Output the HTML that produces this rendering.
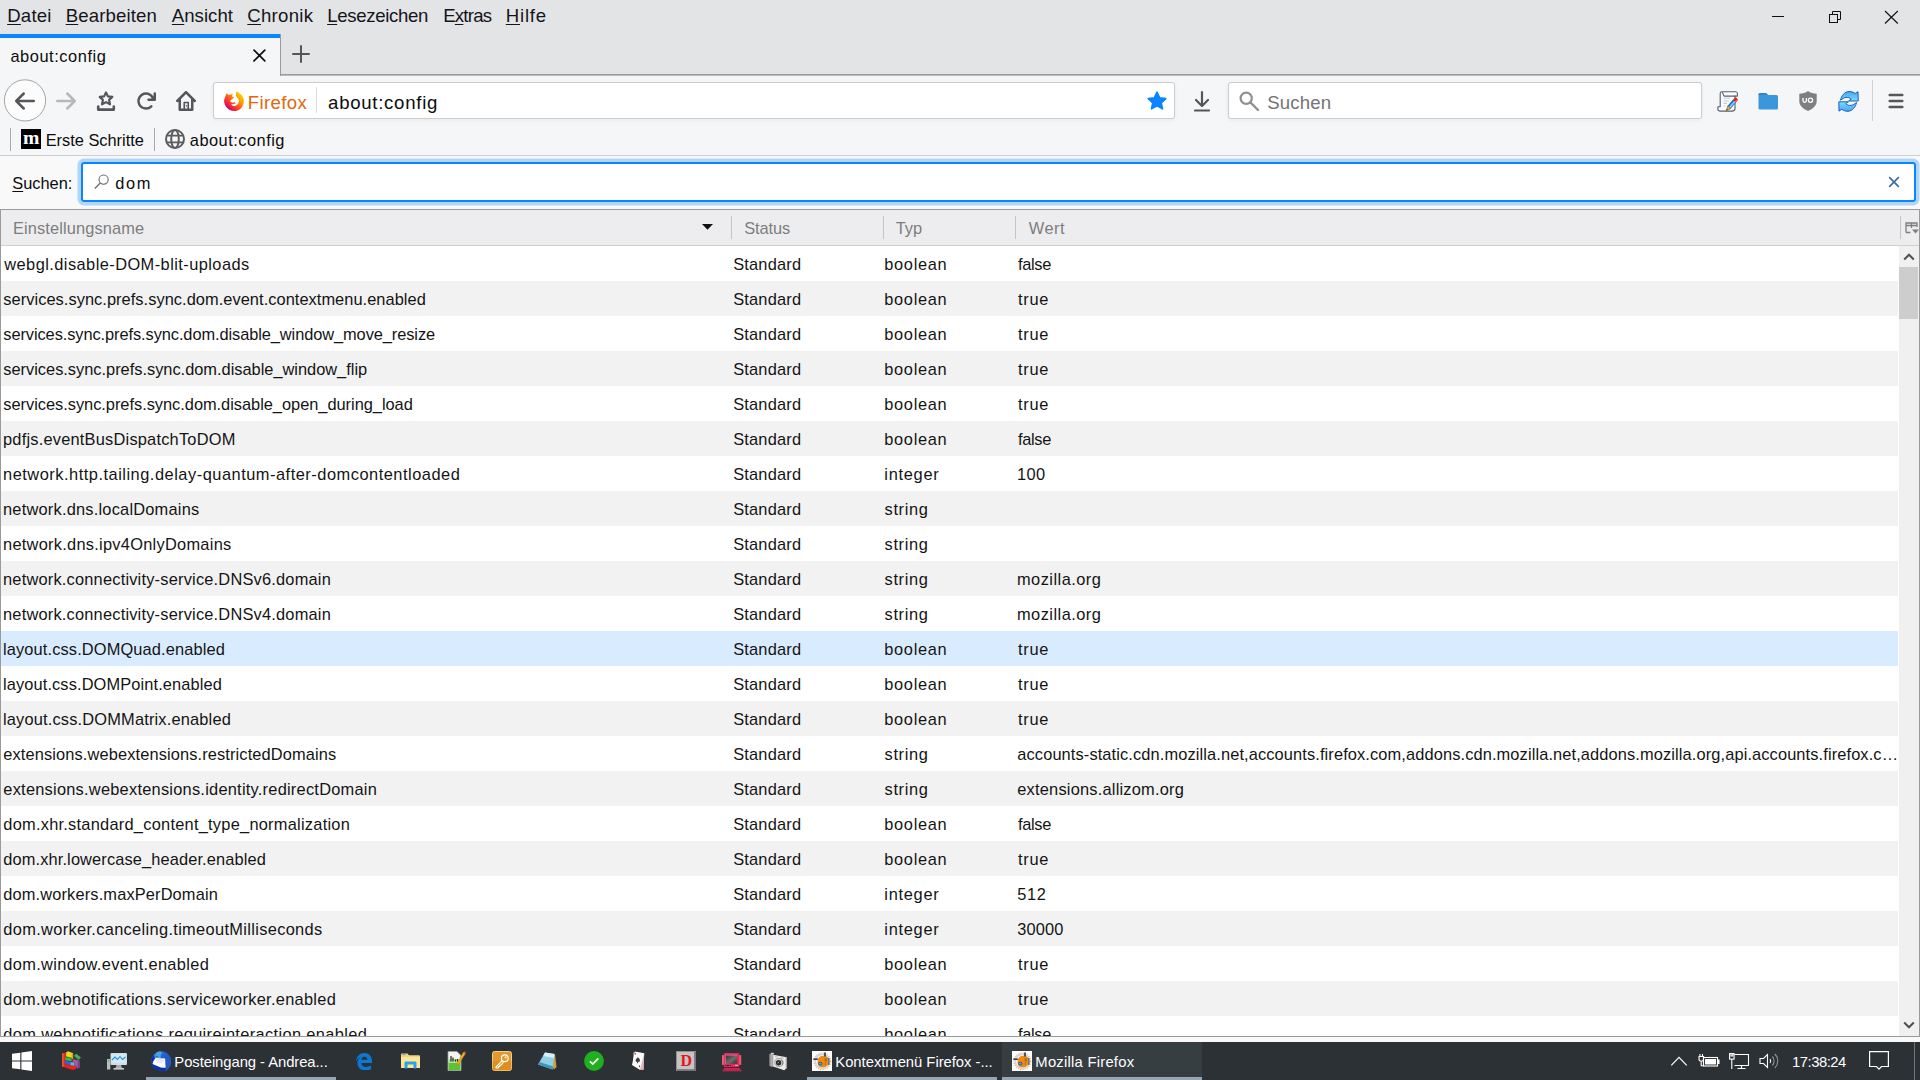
<!DOCTYPE html><html lang="de"><head><meta charset="utf-8"><title>about:config</title><style>
*{box-sizing:border-box;margin:0;padding:0}
html,body{width:1920px;height:1080px;overflow:hidden;background:#f9f9fa;font-family:"Liberation Sans",sans-serif}
.abs,.t,.c,svg.i{position:absolute}
.t{white-space:nowrap;line-height:1;display:block}
.t u{text-decoration:underline;text-decoration-thickness:1px;text-underline-offset:2px}
#menubar{background:#e3e4e6}
#tabstrip{left:0;top:34px;width:1920px;height:42px;background:#e3e4e6}
#tabstrip .bline{left:280px;top:40px;width:1640px;height:1px;background:#9a9a9c}
#tabstrip .bline2{left:281px;top:41px;width:1639px;height:1px;background:#bdbdbf}
#tab{background:#f5f6f7;box-shadow:inset -1px 0 0 #9a9a9c}
#tab .line{left:0;top:.4px;width:280px;height:3.6px;background:#0a84ff}
#navbar{left:0;top:76px;width:1920px;height:47px;background:#f5f6f7}
#urlbar,#searchbar{background:#fff;border-radius:3px;box-shadow:inset 0 0 0 1px #cdcdcf,0 1px 4px rgba(0,0,0,.06)}
#bookmarks{background:#f5f6f7;border-bottom:1px solid #cfcfd1}
#searchrow{background:#f9f9fa}
#filter{background:#fff;border-radius:3px;box-shadow:inset 0 0 0 2px #0a84ff,0 0 0 3.5px rgba(10,132,255,.3)}
#tree{left:0;top:209px;width:1920px;height:828px;border:1px solid #9a9a9a;background:#fff}
#treehead{background:#ededf0;border-bottom:1px solid #cfcfd1}
.sep{width:1px;background:#c4c4c6}
.row{background:#fff;overflow:hidden}
.row.odd{background:#f2f2f2}
.row.sel{background:#d9ebff}
#vscroll{left:1899px;top:246px;width:20px;height:790px;background:#f0f0f0}
#vscroll .thumb{left:0;top:21px;width:19px;height:52px;background:#cdcdcd}
#strip{left:0;top:1037px;width:1920px;height:5px;background:#f9f9fa}
#taskbar{background:#2c3136}
#taskbar .ul{height:3px;top:35px;background:#95a7b3}
#taskbar .act{left:1002px;top:0;width:200px;height:38px;background:#373e42}
</style></head><body>
<div id="menubar" class="abs " style="left:0px;top:0px;width:1920px;height:34px"><svg class="i" style="left:1760px;top:0px" width="160" height="34" viewBox="0 0 160 34" ><g fill="none" stroke="#111" stroke-width="1"><path d="M12 16.500H24"/><rect x="69.500" y="14.500" width="8" height="8"/><path d="M72.500 14.500V11.500H80.500V19.500H77.500"/><path d="M125 11L137.800 23.500M137.800 11L125 23.500" stroke-width="1.100"/></g></svg><span class="t" style="left:7.16px;top:6.70px;font-size:18.6px;letter-spacing:0.231px;color:#15141a"><u>D</u>atei</span><span class="t" style="left:65.70px;top:6.70px;font-size:18.6px;letter-spacing:0.142px;color:#15141a"><u>B</u>earbeiten</span><span class="t" style="left:171.84px;top:6.70px;font-size:18.6px;letter-spacing:0.019px;color:#15141a"><u>A</u>nsicht</span><span class="t" style="left:247.30px;top:6.70px;font-size:18.6px;letter-spacing:0.271px;color:#15141a"><u>C</u>hronik</span><span class="t" style="left:327.14px;top:6.70px;font-size:18.6px;letter-spacing:-0.315px;color:#15141a"><u>L</u>esezeichen</span><span class="t" style="left:443.14px;top:6.70px;font-size:18.6px;letter-spacing:-0.740px;color:#15141a">E<u>x</u>tras</span><span class="t" style="left:505.80px;top:6.70px;font-size:18.6px;letter-spacing:0.766px;color:#15141a"><u>H</u>ilfe</span></div>
<div id="tabstrip" class="abs"><div class="abs bline"></div><div class="abs bline2"></div><svg class="i" style="left:288px;top:7px" width="26" height="26" viewBox="0 0 26 26" ><path d="M13 5V21M5 13H21" stroke="#55555a" stroke-width="2" stroke-linecap="round" fill="none"/></svg></div>
<div id="tab" class="abs " style="left:0px;top:34px;width:281px;height:42px"><div class="abs line"></div><svg class="i" style="left:251px;top:13px" width="17" height="17" viewBox="0 0 17 17" ><path d="M3 3.1L13.8 13.9M13.8 3.1L3 13.9" stroke="#0c0c0d" stroke-width="1.7" stroke-linecap="round" fill="none"/></svg><span class="t" style="left:10.46px;top:13.70px;font-size:16.4px;letter-spacing:0.550px;color:#0c0c0d">about:config</span></div>
<div id="navbar" class="abs"><svg class="i" style="left:3px;top:2px" width="44" height="45" viewBox="0 0 44 45" ><circle cx="22" cy="22.4" r="20.6" fill="#fcfcfd" stroke="#a4a4a7" stroke-width="1"/></svg><svg class="i" style="left:15px;top:15px" width="20" height="20" viewBox="0 0 16 16" ><path d="M15 7H3.414l4.293-4.293a1 1 0 0 0-1.414-1.414l-6 6a1 1 0 0 0 0 1.414l6 6a1 1 0 0 0 1.414-1.414L3.414 9H15a1 1 0 0 0 0-2z" fill="#55555a"/></svg><svg class="i" style="left:56px;top:15px" width="20" height="20" viewBox="0 0 16 16" ><path d="M1 7h11.586L8.293 2.707a1 1 0 0 1 1.414-1.414l6 6a1 1 0 0 1 0 1.414l-6 6a1 1 0 0 1-1.414-1.414L12.586 9H1a1 1 0 0 1 0-2z" fill="#b7b7ba"/></svg><svg class="i" style="left:95px;top:14px" width="22" height="22" viewBox="0 0 22 22" ><g fill="none" stroke="#55555a" stroke-linejoin="round" stroke-linecap="round"><path d="M11 2.400L12.900 6.400L17.300 6.900L14.100 9.900L15 14.300L11 12.100L7 14.300L7.900 9.900L4.700 6.900L9.100 6.400Z" stroke-width="2.200"/><path d="M3.200 16.500V19.600H18.800V16.500" stroke-width="2.600"/></g></svg><svg class="i" style="left:135.7px;top:15px" width="20" height="20" viewBox="0 0 16 16" ><path d="M15 1a1 1 0 0 0-1 1v2.418A6.995 6.995 0 1 0 8 15a6.954 6.954 0 0 0 4.950-2.050 1 1 0 0 0-1.414-1.414A5.019 5.019 0 1 1 12.549 6H10a1 1 0 0 0 0 2h5a1 1 0 0 0 1-1V2a1 1 0 0 0-1-1z" fill="#55555a"/></svg><svg class="i" style="left:176px;top:15px" width="20" height="20" viewBox="0 0 16 16" ><path fill-rule="evenodd" d="M15.707 7.293l-7-7a1 1 0 0 0-1.414 0l-7 7a1 1 0 0 0 1.414 1.414L2 8.414V15a1 1 0 0 0 1 1h10a1 1 0 0 0 1-1V8.414l.293.293a1 1 0 0 0 1.414-1.414zM12 14H4V6.414l4-4 4 4z" fill="#55555a"/><path d="M6.600 14.500V9.200H9.800V14.500" fill="none" stroke="#55555a" stroke-width="1.300" stroke-linejoin="round"/><rect x="7.900" y="11.300" width="1" height="1.100" fill="#55555a"/></svg><svg class="i" style="left:1190px;top:13px" width="24" height="24" viewBox="0 0 24 24" ><g fill="none" stroke="#55555a" stroke-width="2.2" stroke-linecap="round" stroke-linejoin="round"><path d="M12 3V16.5M6 11L12 17L18 11"/><path d="M5 21.5H19" /></g></svg><svg class="i" style="left:1717.2px;top:14.5px" width="21" height="21" viewBox="0 0 21 21" ><defs><linearGradient id="png" x1="0" y1="0" x2="0" y2="1"><stop offset="0" stop-color="#1a5fd0"/><stop offset=".4" stop-color="#a9e2ff"/><stop offset=".62" stop-color="#1f9ff2"/><stop offset="1" stop-color="#0b3fb5"/></linearGradient></defs><path d="M3.200 2.500Q3.200 .800 5 .800H18.800Q20.400 .800 20.400 2.800V5.100H18V17.500Q18 20.100 15 20.100H3.500Q.900 20.100 .900 18V15.700H3.200Z" fill="#fafbfd" stroke="#556071" stroke-width="1.100" stroke-linejoin="round"/><path d="M6.900 5.100H18.500M6.900 5.100L5.300 1.100" fill="none" stroke="#556071" stroke-width="1.100"/><path d="M6.600 7.200H13M6.600 10H12M6.600 12.400H10M6.600 15H8.500" stroke="#c3cbdb" stroke-width="1.100"/><g transform="translate(19.600 7.600) rotate(130.600)"><path d="M3 -2H11.200V2H3Z" fill="url(#png)"/><path d="M1.500 -2H3.400V2H1.500A2 2 0 0 1 1.500 -2Z" fill="#e3241b"/><path d="M1.300 -1.200H3.400" stroke="#f58a84" stroke-width=".9"/><path d="M11.200 -2L15.800 0L11.200 2Z" fill="#e0b354" stroke="#8a6414" stroke-width=".7" stroke-linejoin="round"/><path d="M14.300 -.650L15.800 0L14.300 .650Z" fill="#3a2a08"/></g></svg><svg class="i" style="left:1757px;top:14px" width="22" height="22" viewBox="0 0 22 22" ><path d="M1.5 4.5a1.5 1.5 0 0 1 1.5-1.5h6l2 2h8.5a1.5 1.5 0 0 1 1.500 1.5V18a1.5 1.5 0 0 1-1.5 1.5H3A1.5 1.500 0 0 1 1.500 18Z" fill="#3b97dc"/><path d="M1.5 4.500a1.500 1.500 0 0 1 1.500-1.500h6l2 2H1.500Z" fill="#2f86c9"/></svg><svg class="i" style="left:1797px;top:14px" width="22" height="22" viewBox="0 0 22 22" ><path d="M11 1C8.500 2.800 5.500 3.600 2.300 3.800V11c0 4.500 3.500 7.800 8.700 10 5.200-2.200 8.700-5.500 8.700-10V3.800C16.500 3.600 13.500 2.800 11 1Z" fill="#7f7f7f"/><path d="M6 8v2.600a1.700 1.700 0 0 0 3.400 0V8" fill="none" stroke="#fff" stroke-width="1.300"/><circle cx="13.500" cy="10.300" r="2.100" fill="none" stroke="#fff" stroke-width="1.300"/></svg><svg class="i" style="left:1837.5px;top:14.5px" width="21" height="21" viewBox="0 0 21 21" ><defs><linearGradient id="syg" x1="0" y1="0" x2="0" y2="1"><stop offset="0" stop-color="#4aa6ee"/><stop offset=".6" stop-color="#63c6fb"/><stop offset="1" stop-color="#7fe0fc"/></linearGradient></defs><path d="M2.500 9.200C3.300 5 6.500 .700 11 .500C13.800 .500 15.800 1.400 17.200 2.500L20 .700L20.200 10H10.600L13.300 8.100C12 6.700 10 6.200 8 6.400C6 6.700 4.500 7.700 2.500 9.200Z" fill="url(#syg)" stroke="#1f5cc0" stroke-width="1" stroke-linejoin="round"/><path d="M2.500 9.200C3.300 5 6.500 .700 11 .500C13.800 .500 15.800 1.400 17.200 2.500L20 .700L20.200 10H10.600L13.300 8.100C12 6.700 10 6.200 8 6.400C6 6.700 4.500 7.700 2.500 9.200Z" fill="url(#syg)" stroke="#1f5cc0" stroke-width="1" stroke-linejoin="round" transform="rotate(180 10.500 10.400)"/></svg><div class="abs" style="left:1872px;top:4px;width:1px;height:41px;background:#d2d2d4"></div><svg class="i" style="left:1886px;top:14px" width="20" height="22" viewBox="0 0 20 22" ><path d="M3.700 5H16.300M3.700 11H16.300M3.700 17H16.300" stroke="#55555a" stroke-width="2.500" stroke-linecap="round" fill="none"/></svg></div>
<div id="urlbar" class="abs " style="left:213px;top:82px;width:962px;height:37px"><svg class="i" style="left:11px;top:9px" width="20" height="20" viewBox="0 0 20 20" ><defs><linearGradient id="fxg" x1="0.88" y1="0.12" x2="0.18" y2="0.88"><stop offset="0" stop-color="#ffd60a"/><stop offset=".3" stop-color="#ffa000"/><stop offset=".58" stop-color="#ff5a1c"/><stop offset=".8" stop-color="#ff2236"/><stop offset="1" stop-color="#b3057f"/></linearGradient></defs><path d="M13.500 .2C14.300 1.900 15.700 2.300 16.800 3.200C18 4.200 18.700 5.500 19.200 6.800C19.700 8 20 9 19.900 10.300C19.900 11.600 19.600 12.800 19 14C18.600 15.100 18.100 16.100 17.300 17C16.300 18.100 15 18.900 13.500 19.400C12.400 19.800 11.300 20 10.100 19.900C8.800 19.900 7.500 19.700 6.300 19.200C5.100 18.700 4.100 17.900 3.200 17C2.200 16.100 1.500 15 1 13.800C.5 12.700 .2 11.500 .1 10.300C.1 9.100 .4 7.900 .9 6.700C1.400 5.600 1.600 4.400 2.100 3.300C2.500 2.800 3 2.500 3.500 2.200C3.600 2.900 3.900 3.400 4.300 3.900C5.100 3.600 6 3.500 6.800 3.600C7.400 3.300 8.100 3.100 8.800 3C8.300 3.800 8 4.700 7.900 5.600C8.600 5.700 9.300 5.800 10 6.100C9.600 6.800 9.100 7.500 8.400 8C7.700 8.500 6.900 8.900 6.300 9.400C6.200 9.900 6.200 10.400 6.500 10.800C7.100 11.300 7.800 11.600 8.500 11.700C9.200 11.700 9.900 11.300 10.500 11.100C11 11.500 11.500 11.900 11.800 12.500C11.100 12.800 10.400 12.900 9.600 13C8.800 13.200 8 13.300 7.100 13.300C7.500 13.900 7.900 14.400 8.500 14.700C9.200 15 10 15.100 10.700 15C11.700 14.800 12.500 14.300 13.200 13.600C13.800 13 14.300 12.200 14.600 11.400C14.900 10.600 15 9.700 14.900 8.900C14.600 8.100 14.100 7.500 13.500 6.900C13 6.400 12.400 5.900 12.100 5.300C11.800 4.600 11.700 3.800 11.800 3C11.900 2.300 12.100 1.700 12.400 1.100C12.700 .7 13.100 .4 13.500 .2Z" fill="url(#fxg)"/></svg><div class="abs" style="left:103px;top:5px;width:1px;height:26px;background:#dcdcde"></div><svg class="i" style="left:933px;top:8px" width="22" height="22" viewBox="0 0 22 22" ><path d="M11 2.200L13.700 7.800L19.800 8.600L15.300 12.800L16.500 18.900L11 15.900L5.500 18.900L6.700 12.800L2.200 8.600L8.300 7.800Z" fill="#0a84ff" stroke="#0a84ff" stroke-width="1.600" stroke-linejoin="round"/></svg><span class="t" style="left:34.80px;top:11.70px;font-size:18.6px;letter-spacing:0.349px;color:#e2670a">Firefox</span><span class="t" style="left:115.08px;top:11.70px;font-size:18.6px;letter-spacing:0.721px;color:#0c0c0d">about:config</span></div>
<div id="searchbar" class="abs " style="left:1228px;top:82px;width:474px;height:37px"><svg class="i" style="left:10px;top:8px" width="22" height="22" viewBox="0 0 22 22" ><circle cx="8.200" cy="8.200" r="5.600" fill="none" stroke="#8f8f94" stroke-width="2.200"/><path d="M12.500 12.500L20 20" stroke="#8f8f94" stroke-width="2.400" stroke-linecap="round"/></svg><span class="t" style="left:39.32px;top:11.70px;font-size:18.6px;letter-spacing:0.136px;color:#737373">Suchen</span></div>
<div id="bookmarks" class="abs " style="left:0px;top:123px;width:1920px;height:33px"><div class="abs sep" style="left:10px;top:5px;height:23px;background:#a8a8ab"></div><div class="abs sep" style="left:154px;top:5px;height:23px;background:#a8a8ab"></div><svg class="i" style="left:21px;top:6px" width="20" height="20" viewBox="0 0 20 20"><rect width="20" height="20" fill="#000"/><text x="1.900" y="15" textLength="16.400" lengthAdjust="spacingAndGlyphs" font-family="Liberation Serif, serif" font-weight="700" font-size="19.500" fill="#fff">m</text></svg><svg class="i" style="left:164px;top:5px" width="22" height="22" viewBox="0 0 22 22" ><g fill="none" stroke="#5d5d61" stroke-width="2"><circle cx="11" cy="11" r="9"/><ellipse cx="11" cy="11" rx="3.800" ry="9"/><path d="M3 7.600H19M3 14.400H19" stroke-width="1.800"/></g></svg><span class="t" style="left:45.70px;top:8.80px;font-size:16.4px;letter-spacing:-0.018px;color:#0c0c0d">Erste Schritte</span><span class="t" style="left:189.80px;top:8.80px;font-size:16.4px;letter-spacing:0.488px;color:#0c0c0d">about:config</span></div>
<div id="searchrow" class="abs " style="left:0px;top:156px;width:1920px;height:54px"><span class="t" style="left:12.30px;top:18.75px;font-size:16.4px;letter-spacing:-0.028px;color:#0c0c0d"><u>S</u>uchen:</span></div>
<div id="filter" class="abs " style="left:81px;top:162px;width:1835px;height:40px"><svg class="i" style="left:12px;top:11px" width="18" height="18" viewBox="0 0 18 18" ><circle cx="10.600" cy="6.600" r="4.600" fill="none" stroke="#6a6a6a" stroke-width="1.100"/><path d="M7.300 10L1.800 15.500" stroke="#6a6a6a" stroke-width="1.300"/></svg><svg class="i" style="left:1806px;top:13px" width="14" height="14" viewBox="0 0 14 14" ><path d="M2.200 2.200L11.800 11.800M11.800 2.200L2.200 11.800" stroke="#3b6ea5" stroke-width="1.700" fill="none"/></svg><span class="t" style="left:34.30px;top:12.75px;font-size:16.4px;letter-spacing:1.574px;color:#0c0c0d">dom</span></div>
<div id="tree" class="abs"></div>
<div id="treehead" class="abs " style="left:1px;top:210px;width:1918px;height:36px"><div class="abs sep" style="left:730px;top:6px;height:23px"></div><div class="abs sep" style="left:882px;top:6px;height:23px"></div><div class="abs sep" style="left:1014px;top:6px;height:23px"></div><div class="abs sep" style="left:1899px;top:6px;height:23px"></div><svg class="i" style="left:700px;top:13px" width="13" height="8" viewBox="0 0 13 8" ><path d="M1 1H12L6.500 6.800Z" fill="#111"/></svg><svg class="i" style="left:1904px;top:12px" width="14" height="13" viewBox="0 0 14 13" ><path d="M1 10.500V1H12V5M1 3.500H12M6.500 1V6M1 10.500H5.500" fill="none" stroke="#7e7e7e" stroke-width="1.300"/><path d="M7 7.500H14L10.500 11.500Z" fill="#7e7e7e"/></svg><span class="t" style="left:11.98px;top:9.75px;font-size:16.4px;letter-spacing:0.117px;color:#7d7d7d">Einstellungsname</span><span class="t" style="left:743.30px;top:9.75px;font-size:16.4px;letter-spacing:-0.114px;color:#7d7d7d">Status</span><span class="t" style="left:894.73px;top:9.75px;font-size:16.4px;letter-spacing:-0.014px;color:#7d7d7d">Typ</span><span class="t" style="left:1027.75px;top:9.75px;font-size:16.4px;letter-spacing:0.484px;color:#7d7d7d">Wert</span></div>
<div class="abs row" style="left:1px;top:246px;width:1897px;height:35px"><span class="t" style="left:3.30px;top:9.50px;font-size:16.4px;letter-spacing:0.434px;color:#141414">webgl.disable-DOM-blit-uploads</span><span class="t" style="left:732.20px;top:9.50px;font-size:16.4px;letter-spacing:0.193px;color:#141414">Standard</span><span class="t" style="left:883.32px;top:9.50px;font-size:16.4px;letter-spacing:0.657px;color:#141414">boolean</span><span class="t" style="left:1017.00px;top:9.50px;font-size:16.4px;letter-spacing:-0.314px;color:#141414">false</span></div>
<div class="abs row odd" style="left:1px;top:281px;width:1897px;height:35px"><span class="t" style="left:2.30px;top:9.50px;font-size:16.4px;letter-spacing:0.048px;color:#141414">services.sync.prefs.sync.dom.event.contextmenu.enabled</span><span class="t" style="left:732.20px;top:9.50px;font-size:16.4px;letter-spacing:0.193px;color:#141414">Standard</span><span class="t" style="left:883.32px;top:9.50px;font-size:16.4px;letter-spacing:0.657px;color:#141414">boolean</span><span class="t" style="left:1017.00px;top:9.50px;font-size:16.4px;letter-spacing:0.691px;color:#141414">true</span></div>
<div class="abs row" style="left:1px;top:316px;width:1897px;height:35px"><span class="t" style="left:2.30px;top:9.50px;font-size:16.4px;letter-spacing:-0.084px;color:#141414">services.sync.prefs.sync.dom.disable_window_move_resize</span><span class="t" style="left:732.20px;top:9.50px;font-size:16.4px;letter-spacing:0.193px;color:#141414">Standard</span><span class="t" style="left:883.32px;top:9.50px;font-size:16.4px;letter-spacing:0.657px;color:#141414">boolean</span><span class="t" style="left:1017.00px;top:9.50px;font-size:16.4px;letter-spacing:0.691px;color:#141414">true</span></div>
<div class="abs row odd" style="left:1px;top:351px;width:1897px;height:35px"><span class="t" style="left:2.30px;top:9.50px;font-size:16.4px;letter-spacing:-0.012px;color:#141414">services.sync.prefs.sync.dom.disable_window_flip</span><span class="t" style="left:732.20px;top:9.50px;font-size:16.4px;letter-spacing:0.193px;color:#141414">Standard</span><span class="t" style="left:883.32px;top:9.50px;font-size:16.4px;letter-spacing:0.657px;color:#141414">boolean</span><span class="t" style="left:1017.00px;top:9.50px;font-size:16.4px;letter-spacing:0.691px;color:#141414">true</span></div>
<div class="abs row" style="left:1px;top:386px;width:1897px;height:35px"><span class="t" style="left:2.30px;top:9.50px;font-size:16.4px;letter-spacing:-0.027px;color:#141414">services.sync.prefs.sync.dom.disable_open_during_load</span><span class="t" style="left:732.20px;top:9.50px;font-size:16.4px;letter-spacing:0.193px;color:#141414">Standard</span><span class="t" style="left:883.32px;top:9.50px;font-size:16.4px;letter-spacing:0.657px;color:#141414">boolean</span><span class="t" style="left:1017.00px;top:9.50px;font-size:16.4px;letter-spacing:0.691px;color:#141414">true</span></div>
<div class="abs row odd" style="left:1px;top:421px;width:1897px;height:35px"><span class="t" style="left:2.00px;top:9.50px;font-size:16.4px;letter-spacing:0.212px;color:#141414">pdfjs.eventBusDispatchToDOM</span><span class="t" style="left:732.20px;top:9.50px;font-size:16.4px;letter-spacing:0.193px;color:#141414">Standard</span><span class="t" style="left:883.32px;top:9.50px;font-size:16.4px;letter-spacing:0.657px;color:#141414">boolean</span><span class="t" style="left:1017.00px;top:9.50px;font-size:16.4px;letter-spacing:-0.314px;color:#141414">false</span></div>
<div class="abs row" style="left:1px;top:456px;width:1897px;height:35px"><span class="t" style="left:2.00px;top:9.50px;font-size:16.4px;letter-spacing:0.510px;color:#141414">network.http.tailing.delay-quantum-after-domcontentloaded</span><span class="t" style="left:732.20px;top:9.50px;font-size:16.4px;letter-spacing:0.193px;color:#141414">Standard</span><span class="t" style="left:883.32px;top:9.50px;font-size:16.4px;letter-spacing:0.720px;color:#141414">integer</span><span class="t" style="left:1016.00px;top:9.50px;font-size:16.4px;letter-spacing:0.384px;color:#141414">100</span></div>
<div class="abs row odd" style="left:1px;top:491px;width:1897px;height:35px"><span class="t" style="left:2.00px;top:9.50px;font-size:16.4px;letter-spacing:0.212px;color:#141414">network.dns.localDomains</span><span class="t" style="left:732.20px;top:9.50px;font-size:16.4px;letter-spacing:0.193px;color:#141414">Standard</span><span class="t" style="left:883.62px;top:9.50px;font-size:16.4px;letter-spacing:0.623px;color:#141414">string</span></div>
<div class="abs row" style="left:1px;top:526px;width:1897px;height:35px"><span class="t" style="left:2.00px;top:9.50px;font-size:16.4px;letter-spacing:0.263px;color:#141414">network.dns.ipv4OnlyDomains</span><span class="t" style="left:732.20px;top:9.50px;font-size:16.4px;letter-spacing:0.193px;color:#141414">Standard</span><span class="t" style="left:883.62px;top:9.50px;font-size:16.4px;letter-spacing:0.623px;color:#141414">string</span></div>
<div class="abs row odd" style="left:1px;top:561px;width:1897px;height:35px"><span class="t" style="left:2.00px;top:9.50px;font-size:16.4px;letter-spacing:0.202px;color:#141414">network.connectivity-service.DNSv6.domain</span><span class="t" style="left:732.20px;top:9.50px;font-size:16.4px;letter-spacing:0.193px;color:#141414">Standard</span><span class="t" style="left:883.62px;top:9.50px;font-size:16.4px;letter-spacing:0.623px;color:#141414">string</span><span class="t" style="left:1016.00px;top:9.50px;font-size:16.4px;letter-spacing:0.457px;color:#141414">mozilla.org</span></div>
<div class="abs row" style="left:1px;top:596px;width:1897px;height:35px"><span class="t" style="left:2.00px;top:9.50px;font-size:16.4px;letter-spacing:0.202px;color:#141414">network.connectivity-service.DNSv4.domain</span><span class="t" style="left:732.20px;top:9.50px;font-size:16.4px;letter-spacing:0.193px;color:#141414">Standard</span><span class="t" style="left:883.62px;top:9.50px;font-size:16.4px;letter-spacing:0.623px;color:#141414">string</span><span class="t" style="left:1016.00px;top:9.50px;font-size:16.4px;letter-spacing:0.457px;color:#141414">mozilla.org</span></div>
<div class="abs row odd sel" style="left:1px;top:631px;width:1897px;height:35px"><span class="t" style="left:2.00px;top:9.50px;font-size:16.4px;letter-spacing:0.126px;color:#141414">layout.css.DOMQuad.enabled</span><span class="t" style="left:732.20px;top:9.50px;font-size:16.4px;letter-spacing:0.193px;color:#141414">Standard</span><span class="t" style="left:883.32px;top:9.50px;font-size:16.4px;letter-spacing:0.657px;color:#141414">boolean</span><span class="t" style="left:1017.00px;top:9.50px;font-size:16.4px;letter-spacing:0.691px;color:#141414">true</span></div>
<div class="abs row" style="left:1px;top:666px;width:1897px;height:35px"><span class="t" style="left:2.00px;top:9.50px;font-size:16.4px;letter-spacing:0.111px;color:#141414">layout.css.DOMPoint.enabled</span><span class="t" style="left:732.20px;top:9.50px;font-size:16.4px;letter-spacing:0.193px;color:#141414">Standard</span><span class="t" style="left:883.32px;top:9.50px;font-size:16.4px;letter-spacing:0.657px;color:#141414">boolean</span><span class="t" style="left:1017.00px;top:9.50px;font-size:16.4px;letter-spacing:0.691px;color:#141414">true</span></div>
<div class="abs row odd" style="left:1px;top:701px;width:1897px;height:35px"><span class="t" style="left:2.00px;top:9.50px;font-size:16.4px;letter-spacing:0.172px;color:#141414">layout.css.DOMMatrix.enabled</span><span class="t" style="left:732.20px;top:9.50px;font-size:16.4px;letter-spacing:0.193px;color:#141414">Standard</span><span class="t" style="left:883.32px;top:9.50px;font-size:16.4px;letter-spacing:0.657px;color:#141414">boolean</span><span class="t" style="left:1017.00px;top:9.50px;font-size:16.4px;letter-spacing:0.691px;color:#141414">true</span></div>
<div class="abs row" style="left:1px;top:736px;width:1897px;height:35px"><span class="t" style="left:2.30px;top:9.50px;font-size:16.4px;letter-spacing:0.120px;color:#141414">extensions.webextensions.restrictedDomains</span><span class="t" style="left:732.20px;top:9.50px;font-size:16.4px;letter-spacing:0.193px;color:#141414">Standard</span><span class="t" style="left:883.62px;top:9.50px;font-size:16.4px;letter-spacing:0.623px;color:#141414">string</span><span class="t" style="left:1016.30px;top:9.50px;font-size:16.4px;letter-spacing:0.115px;color:#141414">accounts-static.cdn.mozilla.net,accounts.firefox.com,addons.cdn.mozilla.net,addons.mozilla.org,api.accounts.firefox.c…</span></div>
<div class="abs row odd" style="left:1px;top:771px;width:1897px;height:35px"><span class="t" style="left:2.30px;top:9.50px;font-size:16.4px;letter-spacing:0.239px;color:#141414">extensions.webextensions.identity.redirectDomain</span><span class="t" style="left:732.20px;top:9.50px;font-size:16.4px;letter-spacing:0.193px;color:#141414">Standard</span><span class="t" style="left:883.62px;top:9.50px;font-size:16.4px;letter-spacing:0.623px;color:#141414">string</span><span class="t" style="left:1016.30px;top:9.50px;font-size:16.4px;letter-spacing:0.208px;color:#141414">extensions.allizom.org</span></div>
<div class="abs row" style="left:1px;top:806px;width:1897px;height:35px"><span class="t" style="left:2.30px;top:9.50px;font-size:16.4px;letter-spacing:0.245px;color:#141414">dom.xhr.standard_content_type_normalization</span><span class="t" style="left:732.20px;top:9.50px;font-size:16.4px;letter-spacing:0.193px;color:#141414">Standard</span><span class="t" style="left:883.32px;top:9.50px;font-size:16.4px;letter-spacing:0.657px;color:#141414">boolean</span><span class="t" style="left:1017.00px;top:9.50px;font-size:16.4px;letter-spacing:-0.314px;color:#141414">false</span></div>
<div class="abs row odd" style="left:1px;top:841px;width:1897px;height:35px"><span class="t" style="left:2.30px;top:9.50px;font-size:16.4px;letter-spacing:0.120px;color:#141414">dom.xhr.lowercase_header.enabled</span><span class="t" style="left:732.20px;top:9.50px;font-size:16.4px;letter-spacing:0.193px;color:#141414">Standard</span><span class="t" style="left:883.32px;top:9.50px;font-size:16.4px;letter-spacing:0.657px;color:#141414">boolean</span><span class="t" style="left:1017.00px;top:9.50px;font-size:16.4px;letter-spacing:0.691px;color:#141414">true</span></div>
<div class="abs row" style="left:1px;top:876px;width:1897px;height:35px"><span class="t" style="left:2.30px;top:9.50px;font-size:16.4px;letter-spacing:0.139px;color:#141414">dom.workers.maxPerDomain</span><span class="t" style="left:732.20px;top:9.50px;font-size:16.4px;letter-spacing:0.193px;color:#141414">Standard</span><span class="t" style="left:883.32px;top:9.50px;font-size:16.4px;letter-spacing:0.720px;color:#141414">integer</span><span class="t" style="left:1016.30px;top:9.50px;font-size:16.4px;letter-spacing:0.584px;color:#141414">512</span></div>
<div class="abs row odd" style="left:1px;top:911px;width:1897px;height:35px"><span class="t" style="left:2.30px;top:9.50px;font-size:16.4px;letter-spacing:0.328px;color:#141414">dom.worker.canceling.timeoutMilliseconds</span><span class="t" style="left:732.20px;top:9.50px;font-size:16.4px;letter-spacing:0.193px;color:#141414">Standard</span><span class="t" style="left:883.32px;top:9.50px;font-size:16.4px;letter-spacing:0.720px;color:#141414">integer</span><span class="t" style="left:1016.30px;top:9.50px;font-size:16.4px;letter-spacing:0.144px;color:#141414">30000</span></div>
<div class="abs row" style="left:1px;top:946px;width:1897px;height:35px"><span class="t" style="left:2.30px;top:9.50px;font-size:16.4px;letter-spacing:0.338px;color:#141414">dom.window.event.enabled</span><span class="t" style="left:732.20px;top:9.50px;font-size:16.4px;letter-spacing:0.193px;color:#141414">Standard</span><span class="t" style="left:883.32px;top:9.50px;font-size:16.4px;letter-spacing:0.657px;color:#141414">boolean</span><span class="t" style="left:1017.00px;top:9.50px;font-size:16.4px;letter-spacing:0.691px;color:#141414">true</span></div>
<div class="abs row odd" style="left:1px;top:981px;width:1897px;height:35px"><span class="t" style="left:2.30px;top:9.50px;font-size:16.4px;letter-spacing:0.288px;color:#141414">dom.webnotifications.serviceworker.enabled</span><span class="t" style="left:732.20px;top:9.50px;font-size:16.4px;letter-spacing:0.193px;color:#141414">Standard</span><span class="t" style="left:883.32px;top:9.50px;font-size:16.4px;letter-spacing:0.657px;color:#141414">boolean</span><span class="t" style="left:1017.00px;top:9.50px;font-size:16.4px;letter-spacing:0.691px;color:#141414">true</span></div>
<div class="abs row" style="left:1px;top:1016px;width:1897px;height:20px"><span class="t" style="left:2.30px;top:9.50px;font-size:16.4px;letter-spacing:0.356px;color:#141414">dom.webnotifications.requireinteraction.enabled</span><span class="t" style="left:732.20px;top:9.50px;font-size:16.4px;letter-spacing:0.193px;color:#141414">Standard</span><span class="t" style="left:883.32px;top:9.50px;font-size:16.4px;letter-spacing:0.657px;color:#141414">boolean</span><span class="t" style="left:1017.00px;top:9.50px;font-size:16.4px;letter-spacing:-0.314px;color:#141414">false</span></div>
<div id="vscroll" class="abs"><div class="abs thumb"></div><svg class="i" style="left:3.5px;top:6px" width="12" height="9" viewBox="0 0 12 9" ><path d="M1.200 7.500L6 2.700L10.800 7.500" fill="none" stroke="#505050" stroke-width="2"/></svg><svg class="i" style="left:3.5px;top:775px" width="12" height="9" viewBox="0 0 12 9" ><path d="M1.200 1.500L6 6.300L10.800 1.500" fill="none" stroke="#505050" stroke-width="2"/></svg></div>
<div id="strip" class="abs"></div>
<div id="taskbar" class="abs " style="left:0px;top:1042px;width:1920px;height:38px"><div class="abs act"></div><div class="abs ul" style="left:146px;width:190px"></div><div class="abs ul" style="left:807px;width:190px"></div><div class="abs ul" style="left:1002px;width:200px"></div><svg class="i" style="left:12px;top:9px" width="20" height="20" viewBox="0 0 20 20" ><path d="M0 2.800L8.300 1.700V9.500H0ZM9.400 1.500L20 0V9.500H9.400ZM0 10.500H8.300V18.300L0 17.200ZM9.400 10.500H20V20L9.400 18.500Z" fill="#fff"/></svg><svg class="i" style="left:62px;top:9px" width="20" height="20" viewBox="0 0 20 20" ><path d="M0 2.500L3 1.600L4.900 2.400V6L3.100 5.800V13L14 14.700V18L10.600 18.900L0 15.400Z" fill="#e6261c"/><path d="M0 2.500L1.800 2V15.900L0 15.400Z" fill="#f4502a"/><path d="M4.100 1.500L6 .300L11.100 2.300V8.500L9.600 7.200L4.100 5.700Z" fill="#f2d61a"/><path d="M9.600 3V7.200L11.100 8.500V2.300Z" fill="#c9ab10"/><path d="M3.100 5.900L9.600 7.400V10.600L3.100 9.200Z" fill="#43b14c"/><path d="M3.100 5.900L4 5.300L9.600 6.700V7.400Z" fill="#2d8f38"/><path d="M3.100 9.400L8.500 10.900V14.100L3.100 12.900Z" fill="#3b5cf0"/><path d="M8.500 11.100L12.100 11.600V14.700L8.500 14.100Z" fill="#62b6eb"/><path d="M10.600 9L12 8.200L17.600 9.700V16.700L14.700 17.600L14.200 14.700H12.100V11.500L10.600 11.200Z" fill="#a25aa6"/><path d="M15.800 9.300L17.600 9.700V16.700L15.800 17.300Z" fill="#7d3f83"/><path d="M12.100 4.800L14.200 2.700L18.900 6.400L16.800 8.700Z" fill="#48b552"/><path d="M12.100 4.800L16.800 8.700L16.500 9.400L11.900 5.600Z" fill="#2d8f38"/></svg><svg class="i" style="left:107px;top:11px" width="20" height="18" viewBox="0 0 20 18" ><rect x="0" y="6" width="3.300" height="10.500" fill="#b9bdc2"/><rect x=".8" y="7" width="1.600" height="1.600" fill="#38d23a"/><rect x="3.500" y="0" width="16.500" height="12" rx="1" fill="#d9dcdf"/><rect x="5" y="1.500" width="13.500" height="8.500" fill="#cfeaf9"/><path d="M5 7L8 4L10.500 6.500L13 3.500L15.500 6.500L18.500 4" fill="none" stroke="#2b8fd6" stroke-width="1.100"/><path d="M9.500 12H14L15 15H8.500Z" fill="#a9adb2"/><rect x="6.500" y="15" width="10.500" height="1.600" fill="#c8cbcf"/></svg><svg class="i" style="left:150.6px;top:9px" width="20.5" height="20.5" viewBox="0 0 20.5 20.5" ><defs><linearGradient id="tbg" x1="0" y1="0" x2="1" y2="1"><stop offset="0" stop-color="#2f86e0"/><stop offset=".5" stop-color="#1f5cc8"/><stop offset="1" stop-color="#2a55c0"/></linearGradient></defs><path d="M6 1.200C8.500 -.300 12.500 -.200 15.500 1.800C18.500 3.800 20.500 7 20.300 11C20.100 15 17.500 18.500 14.500 19.700C13 20.200 11 20.200 10.300 19.600C6.500 19.800 2.500 17.500 1 14C-.300 10.500 .500 6.500 2.500 4C3.500 2.800 4.700 1.800 6 1.200Z" fill="url(#tbg)"/><path d="M1 14C-.300 10.500 .500 6.500 2.500 4L4 8L2 13.500L9.900 16.700L14.800 17L14.600 19.600C13 20.200 11 20.200 10.300 19.600C6.500 19.800 2.500 17.500 1 14Z" fill="#0c2fa6"/><path d="M5.500 1.500C7.500 .200 9.800 .300 11 1.500C10 3 9.500 5 9.800 7.200L4.500 7C4 5 4.300 3 5.500 1.500Z" fill="#45a4ea"/><circle cx="5.900" cy="5.600" r=".75" fill="#7a3a10"/><path d="M4.500 6.900L14.100 7.400L14.600 16.700L9.900 16.500L1.600 13.100L2.200 10.500Z" fill="#fbfbfd"/><path d="M5 9.500C7.500 8.300 10.500 8.600 13 10M6 11.500C8 10.800 10 11 11.500 11.800" fill="none" stroke="#cfd3dc" stroke-width=".9"/></svg><svg class="i" style="left:356px;top:10.5px" width="16" height="17.5" viewBox="0 0 16 17.5" ><path d="M0 8.200C.6 3.500 3.800 0 8.300 0c4.500 0 7.700 3.200 7.700 8v2H5.300c.2 2.500 2.200 3.900 4.900 3.900 1.800 0 3.500-.5 4.900-1.400v3.600c-1.600.9-3.500 1.400-5.600 1.400-4.700 0-8-3-8-7.500 0-2.700 1.500-5 3.700-6.300C3.300 4.500 1.200 5.800 0 8.200ZM5.400 6.800h6c-.1-1.900-1.200-3.100-2.900-3.100-1.700 0-2.800 1.200-3.100 3.100Z" fill="#0c78d4"/></svg><svg class="i" style="left:400.6px;top:11px" width="19" height="16" viewBox="0 0 19 16" ><path d="M0 1.500A1 1 0 0 1 1 .500H6.500L8 2.200H18A1 1 0 0 1 19 3.200V15H0Z" fill="#f6d57a"/><path d="M0 4H19V15H0Z" fill="#fde69c"/><rect x="1.200" y="1.200" width="3.500" height="1" fill="#4aa8e8"/><path d="M3.500 15.500V9.500A1 1 0 0 1 4.500 8.500H14.500A1 1 0 0 1 15.500 9.500V15.500H12.500V11.500H6.500V15.500Z" fill="#2aa3e6"/></svg><svg class="i" style="left:447px;top:9px" width="19" height="20" viewBox="0 0 19 20" ><path d="M1 .500H10L14 4.500V19.500H1Z" fill="#f2f4f2" stroke="#9aa09a" stroke-width=".8"/><path d="M1.500 10H13.500V19H1.500Z" fill="#5fc234"/><path d="M1.500 8H13.500V12H1.500Z" fill="#b9e29a"/><path d="M4 5V10.500M6 6.500V10.500M8.500 8.500V10.500M10.500 8V10.500" stroke="#222" stroke-width="1.200"/><path d="M16.500 1L18.500 2.500L11.500 13.500L9.800 14.500L10 12.500Z" fill="#f0b21c" stroke="#a8740c" stroke-width=".5"/><path d="M16.500 1L17.300 0L19 1.200L18.500 2.500Z" fill="#d9433f"/></svg><svg class="i" style="left:492px;top:9px" width="20" height="20" viewBox="0 0 20 20" ><rect x=".500" y=".500" width="19" height="19" rx="2" fill="#e39a2c" stroke="#f6cf8f" stroke-width="1"/><path d="M.500 10H19.500V17.500A2 2 0 0 1 17.500 19.500H2.500A2 2 0 0 1 .500 17.500Z" fill="#d98a18" opacity=".6"/><circle cx="12.800" cy="7.200" r="3.400" fill="none" stroke="#fff" stroke-width="1.150"/><circle cx="13.600" cy="6.400" r=".8" fill="none" stroke="#fff" stroke-width=".7"/><path d="M10.300 9.600L4 15.900V17H6.300V15.500H7.800V14H9.300L11.400 11.200" fill="none" stroke="#fff" stroke-width="1.100" stroke-linejoin="round"/></svg><svg class="i" style="left:538px;top:10px" width="19" height="18" viewBox="0 0 19 18" ><path d="M7.500 1L17 2.500L18.500 15L16 17.500Z" fill="#c9a24a"/><path d="M7 .500L16.500 2L14.500 17.500L0 12.500Z" fill="#8fd0e8"/><path d="M7 .500L16.500 2L15.800 6L5.200 4Z" fill="#d6eef7"/><path d="M0 12.500L14.500 17.500L15 14.500L1.500 10Z" fill="#3e94b8"/></svg><svg class="i" style="left:584px;top:9px" width="20" height="20" viewBox="0 0 20 20" ><circle cx="10" cy="10" r="9.900" fill="#1fb01f"/><path d="M5.800 10.300L8.800 13L14.300 7.300" fill="none" stroke="#fff" stroke-width="1.700"/></svg><svg class="i" style="left:632px;top:9px" width="14" height="19.5" viewBox="0 0 14 19.5" ><path d="M1.300 1.200L12.200 2.200L11.600 18.800L8 18.800L1 14.500Z" fill="#d98a8a"/><path d="M9.500 10L12.200 2.200L11.600 18.800L8 18.800Z" fill="#e7b5b5"/><path d="M11.300 4.500L11 18.500" stroke="#b9bcc0" stroke-width=".8"/><path d="M2.800 .400L12.200 2.200L8 18.800L0 13.900Z" fill="#fbfbfc"/><path d="M5.800 6.300C7.200 7.300 8.300 8.600 7.900 10C7.600 11 6.600 11.200 6 10.600L6.200 12.300L4.700 11.900L5.300 10.500C4.600 11 3.600 10.600 3.600 9.500C3.600 8 5 7.300 5.800 6.300Z" fill="#3c3c3c"/><path d="M3.300 2V3.600M7.500 14.500V16.200" stroke="#444" stroke-width="1"/></svg><svg class="i" style="left:676px;top:9px" width="20" height="20" viewBox="0 0 20 20"><rect width="20" height="20" fill="#8e8e8e"/><rect x="1" y="1" width="18" height="18" fill="#c4c4c4"/><path d="M1 19H19V1" fill="none" stroke="#6e6e6e" stroke-width="1.500"/><text x="10.300" y="15.300" text-anchor="middle" font-family="Liberation Serif, serif" font-weight="700" font-size="16" fill="#e8141c">D</text></svg><svg class="i" style="left:722px;top:11px" width="20" height="18.5" viewBox="0 0 20 18.5" ><defs><linearGradient id="scg" x1="0" y1="0" x2="1" y2="1"><stop offset="0" stop-color="#2b2b2b"/><stop offset=".55" stop-color="#6e6e6e"/><stop offset="1" stop-color="#303030"/></linearGradient></defs><rect x="0" y="2.100" width="2.200" height="9.800" fill="#e5606c"/><rect x="17" y="2.100" width="2.200" height="9.800" fill="#e5606c"/><rect x="1.900" y=".100" width="15.300" height="13.800" rx=".6" fill="#e8245a"/><rect x="3.300" y="2.100" width="11.800" height="8.600" fill="url(#scg)"/><path d="M3.300 10.700V2.100H15.100" fill="none" stroke="#f59ab5" stroke-width=".6"/><rect x="3.400" y="12" width="1" height="1" fill="#3a1a22"/><rect x="5" y="12" width="2" height="1" fill="#3a1a22"/><rect x="8" y="12" width="1" height="1" fill="#3a1a22"/><rect x="13" y="11.800" width="3" height="1.200" fill="#f2a0a8"/><path d="M2.400 15H17.600L20 18.300H0Z" fill="#e8245a"/><path d="M1.500 16.200H18.500M.700 17.400H19.300" stroke="#2c3136" stroke-width=".55" stroke-dasharray="1.300 .9"/></svg><svg class="i" style="left:768.8px;top:10px" width="19" height="19" viewBox="0 0 19 19" ><defs><linearGradient id="cmg" x1="0" y1="0" x2="1" y2="0"><stop offset="0" stop-color="#6f6f6f"/><stop offset=".55" stop-color="#b4b4b4"/><stop offset="1" stop-color="#9a9a9a"/></linearGradient></defs><path d="M2 .800H4.800V2.500H2Z" fill="#e3e3e3"/><path d="M.100 2.200Q2 .600 4.100 2.200V14.500Q2 15.200 .100 13.500Z" fill="url(#cmg)"/><path d="M4.100 2.700L17.800 5.200V16.100L15.200 18.200L4.100 14.500Z" fill="#ececec"/><path d="M16.700 5V17L17.800 16.100V5.200Z" fill="#9c9c9c"/><path d="M6 4.500L9 5" stroke="#b5b5b5" stroke-width=".7"/><path d="M11.500 5.600L14.500 6.200" stroke="#b9a668" stroke-width=".8"/><circle cx="9.900" cy="10.500" r="4.100" fill="#d9d9d9" stroke="#8e8e8e" stroke-width=".8"/><circle cx="9.600" cy="10.700" r="2.700" fill="#2b2b2b"/><path d="M8.600 11.800A1.600 1.600 0 0 1 10.300 9.600L9.700 11Z" fill="#49b7c9"/><path d="M12.500 7.800A4.300 4.300 0 0 1 13.300 13.200" fill="none" stroke="#6e6e6e" stroke-width=".8"/></svg><svg class="i" style="left:812px;top:9px" width="20" height="20" viewBox="0 0 20 20" ><rect width="20" height="20" fill="#fff"/><circle cx="10.300" cy="10.300" r="8.300" fill="none" stroke="#f4b95a" stroke-width="1.200" stroke-dasharray="1.300 1"/><circle cx="10.300" cy="10.300" r="6.900" fill="none" stroke="#c6d3ec" stroke-width="1.700"/><path d="M16.800 7V14" stroke="#5a668e" stroke-width="1.500"/><path d="M6.500 7C8 5 11 4.300 13.500 5L15.800 6.500C16.600 9 16.500 12 15.500 14.300C13.500 16.300 10 16.800 7.300 15.500C5.300 13.500 5 9.500 6.500 7Z" fill="#ee8a0e"/><path d="M12.200 5.500V1.500H13.800V5.500Z" fill="#27304c"/><path d="M1.300 7.400H5.800V8.900H1.300Z" fill="#27304c"/><path d="M12.600 7.300H14.900V10.200H12.600Z" fill="#a9701c"/><path d="M12.800 10.200H14V15.500L12.800 14.500Z" fill="#c97a10"/><ellipse cx="8.300" cy="12.700" rx="1.900" ry="1.400" fill="#5b9be8" stroke="#33415f" stroke-width=".7"/></svg><svg class="i" style="left:1012px;top:9px" width="20" height="20" viewBox="0 0 20 20" ><rect width="20" height="20" fill="#fff"/><circle cx="10.300" cy="10.300" r="8.300" fill="none" stroke="#f4b95a" stroke-width="1.200" stroke-dasharray="1.300 1"/><circle cx="10.300" cy="10.300" r="6.900" fill="none" stroke="#c6d3ec" stroke-width="1.700"/><path d="M16.800 7V14" stroke="#5a668e" stroke-width="1.500"/><path d="M6.500 7C8 5 11 4.300 13.500 5L15.800 6.500C16.600 9 16.500 12 15.500 14.300C13.500 16.300 10 16.800 7.300 15.500C5.300 13.500 5 9.500 6.500 7Z" fill="#ee8a0e"/><path d="M12.200 5.500V1.500H13.800V5.500Z" fill="#27304c"/><path d="M1.300 7.400H5.800V8.900H1.300Z" fill="#27304c"/><path d="M12.600 7.300H14.900V10.200H12.600Z" fill="#a9701c"/><path d="M12.800 10.200H14V15.500L12.800 14.500Z" fill="#c97a10"/><ellipse cx="8.300" cy="12.700" rx="1.900" ry="1.400" fill="#5b9be8" stroke="#33415f" stroke-width=".7"/></svg><svg class="i" style="left:1670px;top:13px" width="18" height="12" viewBox="0 0 18 12" ><path d="M1.300 10.300L9 2.300L16.700 10.300" fill="none" stroke="#fff" stroke-width="1.200"/></svg><svg class="i" style="left:1698px;top:11px" width="22" height="15" viewBox="0 0 22 15" ><g fill="none" stroke="#fff" stroke-width="1.100"><rect x="5.500" y="4.500" width="14" height="8.500"/><path d="M19.500 7V10.500H21V7Z" fill="#fff"/><path d="M2 1V3.500M4.500 1V3.500M1 3.500H5.500V6A2.200 2.200 0 0 1 1 6ZM3.200 8.200V12.800H6"/></g><rect x="7" y="6" width="11" height="5.500" fill="#fff"/></svg><svg class="i" style="left:1729px;top:11px" width="21" height="17" viewBox="0 0 21 17" ><g fill="none" stroke="#fff" stroke-width="1.100"><path d="M5.500 1.500H19.500V12.500H5.500M12.500 12.500V15.500M8.500 15.500H16.500"/><rect x=".6" y=".6" width="4.500" height="5.500"/><path d="M2 .6V3H3.800V.6M2.800 6V16"/></g></svg><svg class="i" style="left:1758.5px;top:10px" width="22" height="18" viewBox="0 0 22 18" ><g fill="none" stroke="#fff" stroke-width="1.100"><path d="M1 6.500H4.500L8.500 2.500V15.500L4.500 11.500H1Z"/><path d="M11 7A3.300 3.300 0 0 1 11 11"/></g><g fill="none" stroke="#8b9096" stroke-width="1.100"><path d="M13.300 4.500A6.500 6.500 0 0 1 13.300 13.500"/><path d="M15.800 2A9.800 9.800 0 0 1 15.800 16"/></g></svg><svg class="i" style="left:1869px;top:9px" width="20" height="20" viewBox="0 0 20 20" ><path d="M.6 .6H19.400V15.500H12.500L10 18.200L7.500 15.500H.6Z" fill="none" stroke="#fff" stroke-width="1.200"/></svg><div class="abs" style="left:1914px;top:0;width:1px;height:38px;background:#70767b"></div><span class="t" style="left:174.32px;top:12.90px;font-size:14.8px;letter-spacing:-0.055px;color:#fff">Posteingang - Andrea...</span><span class="t" style="left:835.32px;top:12.90px;font-size:14.8px;letter-spacing:-0.021px;color:#fff">Kontextmenü Firefox -...</span><span class="t" style="left:1035.32px;top:12.90px;font-size:14.8px;letter-spacing:0.243px;color:#fff">Mozilla Firefox</span><span class="t" style="left:1792.00px;top:12.90px;font-size:14.8px;letter-spacing:-0.478px;color:#fff">17:38:24</span></div>
</body></html>
